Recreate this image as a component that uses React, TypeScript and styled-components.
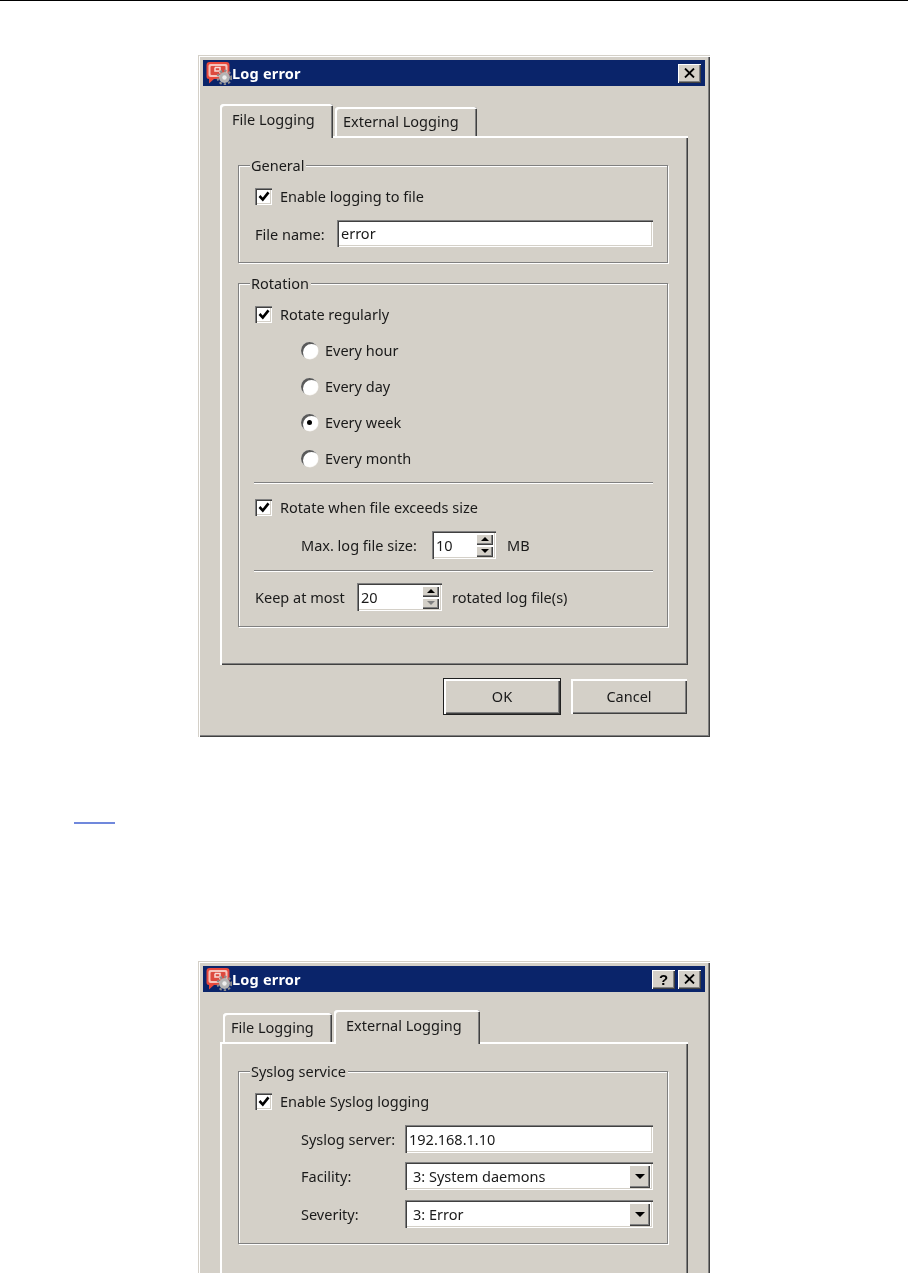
import styled, { createGlobalStyle } from 'styled-components';

const GlobalStyle = createGlobalStyle`
  html, body {
    margin: 0;
    padding: 0;
    background: #fff;
  }
  body {
    font-family: "Noto Sans", "Liberation Sans", Arial, sans-serif;
    font-size: 14.5px;
    color: #1a1a1a;
  }
`;

const Page = styled.div`
  width: 908px;
  height: 1273px;
  overflow: hidden;
  background: #fff;
  border-top: 1px solid #000;
  box-sizing: border-box;
`;

const Dialog = styled.section<{ $top: number; $height: number }>`
  box-sizing: border-box;
  width: 512px;
  height: ${(p) => p.$height}px;
  margin: ${(p) => p.$top}px 0 0 198px;
  padding: 5px;
  background: #d4d0c8;
  box-shadow: inset 1px 1px 0 #d4d0c8, inset 2px 2px 0 #fff, inset -1px -1px 0 #404040, inset -2px -2px 0 #808080;
  filter: blur(0.45px);
`;

const TitleBar = styled.header`
  display: flex;
  align-items: center;
  height: 26px;
  padding: 0 4px 0 3px;
  background: #0a246a;
  color: #fff;
  font-weight: bold;
  font-size: 14.5px;
`;

const TitleText = styled.span`
  flex: 1;
  letter-spacing: 0.2px;
`;

const CaptionButton = styled.button`
  width: 23px;
  height: 19px;
  margin-left: 3px;
  padding: 0;
  border: 0;
  background: #d4d0c8;
  display: flex;
  align-items: center;
  justify-content: center;
  color: #000;
  font: bold 15px "Liberation Sans", Arial, sans-serif;
  box-shadow: inset 1px 1px 0 #fff, inset -1px -1px 0 #404040, inset -2px -2px 0 #808080;
`;

const TabArea = styled.div`
  margin: 18px 17px 0;
`;

const TabRow = styled.div`
  display: flex;
  align-items: flex-end;
  height: 32px;
  position: relative;
  z-index: 1;
`;

const Tab = styled.div<{ $active?: boolean; $width: number; $left?: number }>`
  box-sizing: border-box;
  width: ${(p) => p.$width}px;
  height: ${(p) => (p.$active ? 34 : 29)}px;
  margin-left: ${(p) => p.$left ?? 0}px;
  margin-bottom: ${(p) => (p.$active ? -2 : 0)}px;
  padding: ${(p) => (p.$active ? '5px 0 0 12px' : '4px 0 0 8px')};
  background: #d4d0c8;
  border-radius: 3px 3px 0 0;
  box-shadow: inset 2px 2px 0 #fff, inset -1px 0 0 #404040, inset -2px 0 0 #808080;
  white-space: nowrap;
`;

const Panel = styled.div<{ $height: number }>`
  box-sizing: border-box;
  height: ${(p) => p.$height}px;
  padding: 29px 20px 0 18px;
  background: #d4d0c8;
  box-shadow: inset 2px 2px 0 #fff, inset -1px -1px 0 #404040, inset -2px -2px 0 #808080;
`;

const Group = styled.div<{ $height: number; $gap?: number }>`
  box-sizing: border-box;
  position: relative;
  height: ${(p) => p.$height}px;
  margin-bottom: ${(p) => p.$gap ?? 0}px;
  padding: 12px 14px 0 16px;
  border: 1px solid #808080;
  box-shadow: inset 1px 1px 0 #fff, 1px 1px 0 #fff;
`;

const Legend = styled.span`
  position: absolute;
  top: -10px;
  left: 11px;
  padding: 0 2px 0 1px;
  line-height: 18px;
  background: #d4d0c8;
`;

const Row = styled.div<{ $height?: number; $indent?: number; $top?: number }>`
  display: flex;
  align-items: center;
  height: ${(p) => p.$height ?? 36}px;
  margin-left: ${(p) => p.$indent ?? 0}px;
  margin-top: ${(p) => p.$top ?? 0}px;
  white-space: nowrap;
`;

const CheckBox = styled.span`
  box-sizing: border-box;
  width: 17px;
  height: 17px;
  margin-right: 8px;
  flex: none;
  display: flex;
  align-items: center;
  justify-content: center;
  background: #fff;
  box-shadow: inset 1px 1px 0 #808080, inset 2px 2px 0 #404040, inset -1px -1px 0 #fff, inset -2px -2px 0 #d4d0c8;
`;

const Radio = styled.span<{ $on?: boolean }>`
  box-sizing: border-box;
  width: 17px;
  height: 17px;
  margin-right: 7px;
  flex: none;
  border-radius: 50%;
  display: flex;
  align-items: center;
  justify-content: center;
  background: #fff;
  box-shadow: inset 2px 2px 0 #5a5a5a, 0.5px 0.5px 0 #f4f2ee;

  &::after {
    content: '';
    width: 5px;
    height: 5px;
    border-radius: 50%;
    background: ${(p) => (p.$on ? '#000' : 'transparent')};
  }
`;

const Separator = styled.hr<{ $top: number }>`
  height: 0;
  margin: ${(p) => p.$top}px 0 0 -1px;
  border: 0;
  border-top: 1px solid #808080;
  border-bottom: 1px solid #fff;
`;

const Sunken = styled.div<{ $width: number; $left?: number; $height?: number }>`
  box-sizing: border-box;
  display: flex;
  align-items: center;
  width: ${(p) => p.$width}px;
  height: ${(p) => p.$height ?? 28}px;
  margin-left: ${(p) => p.$left ?? 0}px;
  padding: 2px 3px 3px 4px;
  background: #fff;
  flex: none;
  box-shadow: inset 1px 1px 0 #808080, inset 2px 2px 0 #404040, inset -1px -1px 0 #fff, inset -2px -2px 0 #d4d0c8;
`;

const FieldText = styled.span<{ $left?: number }>`
  flex: 1;
  margin-left: ${(p) => p.$left ?? 0}px;
`;

const SpinColumn = styled.div`
  width: 17px;
  height: 100%;
  margin-top: 1px;
  display: flex;
  flex-direction: column;
  gap: 1px;
`;

const ArrowButton = styled.span<{ $wide?: boolean }>`
  flex: ${(p) => (p.$wide ? 'none' : '1')};
  display: flex;
  align-items: center;
  justify-content: center;
  width: ${(p) => (p.$wide ? '21px' : 'auto')};
  height: ${(p) => (p.$wide ? '23px' : 'auto')};
  margin-top: ${(p) => (p.$wide ? '1px' : '0')};
  background: #d4d0c8;
  box-shadow: inset 1px 1px 0 #fff, inset -1px -1px 0 #404040, inset -2px -2px 0 #808080;
`;

const Arrow = styled.i<{ $down?: boolean; $muted?: boolean; $size?: number }>`
  width: 0;
  height: 0;
  border-left: ${(p) => p.$size ?? 4}px solid transparent;
  border-right: ${(p) => p.$size ?? 4}px solid transparent;
  border-${(p) => (p.$down ? 'top' : 'bottom')}: ${(p) => p.$size ?? 4}px solid ${(p) => (p.$muted ? '#808080' : '#000')};
`;

const Label = styled.span<{ $left?: number; $width?: number }>`
  margin-left: ${(p) => p.$left ?? 0}px;
  width: ${(p) => (p.$width ? `${p.$width}px` : 'auto')};
  flex: none;
`;

const ButtonRow = styled.div`
  display: flex;
  justify-content: flex-end;
  align-items: center;
  gap: 10px;
  height: 37px;
  margin: 13px 1px 0 0;
`;

const Button = styled.button<{ $primary?: boolean }>`
  box-sizing: border-box;
  width: ${(p) => (p.$primary ? 118 : 116)}px;
  height: ${(p) => (p.$primary ? 37 : 35)}px;
  padding: 0 0 2px;
  border: ${(p) => (p.$primary ? '1px solid #202020' : '0')};
  background: #d4d0c8;
  color: #1a1a1a;
  font: 14.5px "Noto Sans", "Liberation Sans", Arial, sans-serif;
  box-shadow: inset 2px 2px 0 #fff, inset -1px -1px 0 #404040, inset -2px -2px 0 #808080;
`;

const LinkRule = styled.a`
  display: block;
  width: 41px;
  height: 0;
  margin: 85px 0 0 74px;
  border-bottom: 2px solid #7088dc;
`;

function LogIcon() {
  return (
    <svg width="26" height="24" viewBox="0 0 26 24" style={{ flex: 'none' }}>
      <path d="M3.5 1h17a3 3 0 0 1 3 3v11a3 3 0 0 1-3 3H8l-5 4.500v-4.500a2.500 2.500 0 0 1-2.500-2.500V4a3 3 0 0 1 3-3z" fill="#e8483c" />
      <rect x="2.500" y="3" width="19" height="13" rx="2" fill="#f6c4bc" />
      <rect x="4.500" y="5" width="15" height="9" rx="1" fill="#dd4a3e" />
      <path d="M9 6.500h5v6M9 6.500v3.500h4" stroke="#f9dcd6" strokeWidth="1.500" fill="none" />
      <circle cx="18.500" cy="16.500" r="6.800" fill="none" stroke="#8c8c8c" strokeWidth="2.200" strokeDasharray="2.400 2.100" />
      <circle cx="18.500" cy="16.500" r="5.400" fill="#b4b4b4" />
      <circle cx="18.500" cy="16.500" r="2.200" fill="#ededed" />
    </svg>
  );
}

function CloseGlyph() {
  return (
    <svg width="11" height="10" viewBox="0 0 11 10">
      <path d="M1 0.500l9 9M10 0.500l-9 9" stroke="#000" strokeWidth="1.800" fill="none" />
    </svg>
  );
}

function Check({ label }: { label: string }) {
  return (
    <>
      <CheckBox>
        <svg width="12" height="11" viewBox="0 0 12 11">
          <path d="M1.500 5l3.300 3.600 5.700-7.200" stroke="#000" strokeWidth="2.600" fill="none" />
        </svg>
      </CheckBox>
      <span>{label}</span>
    </>
  );
}

function Spin({ value, width, left, muted }: { value: string; width: number; left?: number; muted?: boolean }) {
  return (
    <Sunken $width={width} $left={left}>
      <FieldText>{value}</FieldText>
      <SpinColumn>
        <ArrowButton><Arrow /></ArrowButton>
        <ArrowButton><Arrow $down $muted={muted} /></ArrowButton>
      </SpinColumn>
    </Sunken>
  );
}

function Select({ value }: { value: string }) {
  return (
    <Sunken $width={248}>
      <FieldText $left={4}>{value}</FieldText>
      <ArrowButton $wide><Arrow $down $size={5} /></ArrowButton>
    </Sunken>
  );
}

function App() {
  return (
    <Page>
      <GlobalStyle />

      <Dialog $top={54} $height={682}>
        <TitleBar>
          <LogIcon />
          <TitleText>Log error</TitleText>
          <CaptionButton aria-label="Close"><CloseGlyph /></CaptionButton>
        </TitleBar>
        <TabArea>
          <TabRow>
            <Tab $active $width={113}>File Logging</Tab>
            <Tab $width={142} $left={2}>External Logging</Tab>
          </TabRow>
          <Panel $height={529}>
            <Group $height={98} $gap={20}>
              <Legend>General</Legend>
              <Row><Check label="Enable logging to file" /></Row>
              <Row $height={27} $top={6}>
                <Label $width={82}>File name:</Label>
                <Sunken $width={316} $height={27}><FieldText>error</FieldText></Sunken>
              </Row>
            </Group>

            <Group $height={344}>
              <Legend>Rotation</Legend>
              <Row><Check label="Rotate regularly" /></Row>
              <Row $indent={46}><Radio /><span>Every hour</span></Row>
              <Row $indent={46}><Radio /><span>Every day</span></Row>
              <Row $indent={46}><Radio $on /><span>Every week</span></Row>
              <Row $indent={46}><Radio /><span>Every month</span></Row>
              <Separator $top={6} />
              <Row $top={5}><Check label="Rotate when file exceeds size" /></Row>
              <Row $height={28} $top={6} $indent={46}>
                <Label $width={131}>Max. log file size:</Label>
                <Spin value="10" width={64} />
                <Label $left={11}>MB</Label>
              </Row>
              <Separator $top={11} />
              <Row $height={28} $top={11}>
                <Label $width={102}>Keep at most</Label>
                <Spin value="20" width={85} muted />
                <Label $left={10}>rotated log file(s)</Label>
              </Row>
            </Group>
          </Panel>
          <ButtonRow>
            <Button $primary>OK</Button>
            <Button>Cancel</Button>
          </ButtonRow>
        </TabArea>
      </Dialog>

      <LinkRule />

      <Dialog $top={137} $height={400}>
        <TitleBar>
          <LogIcon />
          <TitleText>Log error</TitleText>
          <CaptionButton aria-label="Help">?</CaptionButton>
          <CaptionButton aria-label="Close"><CloseGlyph /></CaptionButton>
        </TitleBar>
        <TabArea>
          <TabRow>
            <Tab $width={109} $left={3}>File Logging</Tab>
            <Tab $active $width={146} $left={2}>External Logging</Tab>
          </TabRow>
          <Panel $height={300}>
            <Group $height={173}>
              <Legend>Syslog service</Legend>
              <Row $top={-1}><Check label="Enable Syslog logging" /></Row>
              <Row $height={28} $top={6} $indent={46}>
                <Label $width={104}>Syslog server:</Label>
                <Sunken $width={248}><FieldText>192.168.1.10</FieldText></Sunken>
              </Row>
              <Row $height={28} $top={9} $indent={46}>
                <Label $width={104}>Facility:</Label>
                <Select value="3: System daemons" />
              </Row>
              <Row $height={28} $top={10} $indent={46}>
                <Label $width={104}>Severity:</Label>
                <Select value="3: Error" />
              </Row>
            </Group>
          </Panel>
        </TabArea>
      </Dialog>
    </Page>
  );
}

export default App;
